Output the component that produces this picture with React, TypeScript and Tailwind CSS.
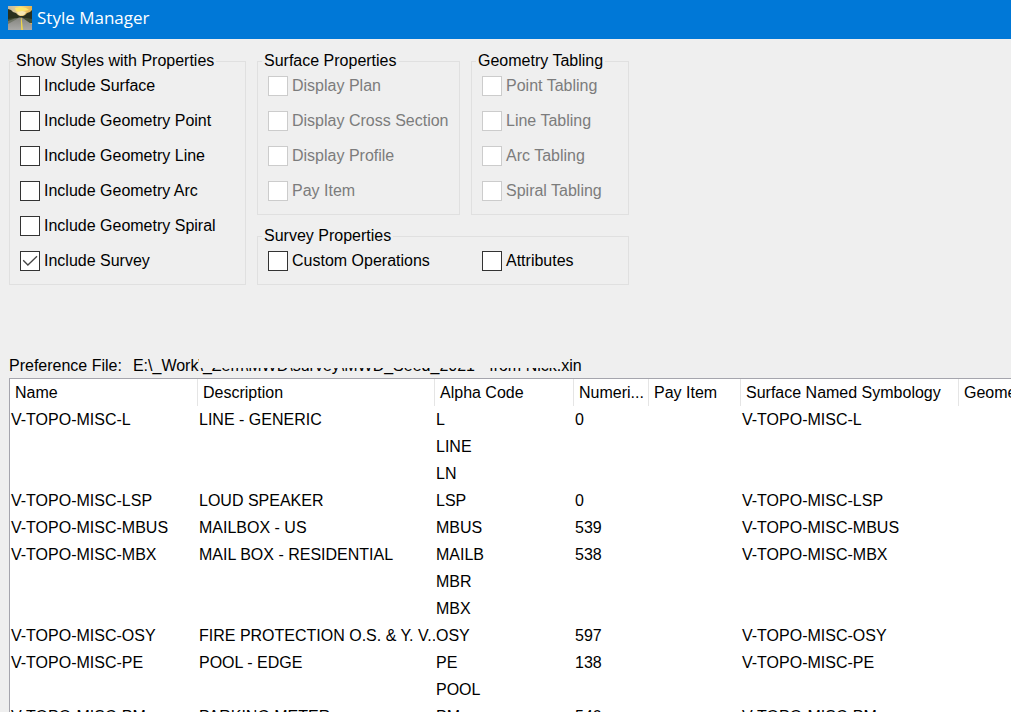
import { useState } from "react";

type Option = { label: string; checked?: boolean; disabled?: boolean };

const styleOptions: Option[] = [
  { label: "Include Surface" },
  { label: "Include Geometry Point" },
  { label: "Include Geometry Line" },
  { label: "Include Geometry Arc" },
  { label: "Include Geometry Spiral" },
  { label: "Include Survey", checked: true },
];

const surfaceOptions: Option[] = [
  { label: "Display Plan", disabled: true },
  { label: "Display Cross Section", disabled: true },
  { label: "Display Profile", disabled: true },
  { label: "Pay Item", disabled: true },
];

const tablingOptions: Option[] = [
  { label: "Point Tabling", disabled: true },
  { label: "Line Tabling", disabled: true },
  { label: "Arc Tabling", disabled: true },
  { label: "Spiral Tabling", disabled: true },
];

const headers = [
  "Name",
  "Description",
  "Alpha Code",
  "Numeri...",
  "Pay Item",
  "Surface Named Symbology",
  "Geometry Point Symbology",
];

// name, description, alpha code, numeric code, pay item, surface symbology, geometry symbology
const rows = [
  ["V-TOPO-MISC-L", "LINE - GENERIC", "L", "0", "", "V-TOPO-MISC-L", ""],
  ["", "", "LINE", "", "", "", ""],
  ["", "", "LN", "", "", "", ""],
  ["V-TOPO-MISC-LSP", "LOUD SPEAKER", "LSP", "0", "", "V-TOPO-MISC-LSP", ""],
  ["V-TOPO-MISC-MBUS", "MAILBOX - US", "MBUS", "539", "", "V-TOPO-MISC-MBUS", ""],
  ["V-TOPO-MISC-MBX", "MAIL BOX - RESIDENTIAL", "MAILB", "538", "", "V-TOPO-MISC-MBX", ""],
  ["", "", "MBR", "", "", "", ""],
  ["", "", "MBX", "", "", "", ""],
  ["V-TOPO-MISC-OSY", "FIRE PROTECTION O.S. & Y. V..", "OSY", "597", "", "V-TOPO-MISC-OSY", ""],
  ["V-TOPO-MISC-PE", "POOL - EDGE", "PE", "138", "", "V-TOPO-MISC-PE", ""],
  ["", "", "POOL", "", "", "", ""],
  ["V-TOPO-MISC-PM", "PARKING METER", "PM", "540", "", "V-TOPO-MISC-PM", ""],
];

function Check({ option }: { option: Option }) {
  const [checked, setChecked] = useState(!!option.checked);

  return (
    <label
      className={
        option.disabled
          ? "flex h-5 items-center gap-1 whitespace-nowrap text-[#7c7c7c]"
          : "flex h-5 items-center gap-1 whitespace-nowrap text-black"
      }
    >
      <span className="relative h-5 w-5 shrink-0">
        <input
          type="checkbox"
          checked={checked}
          disabled={option.disabled}
          onChange={(e) => setChecked(e.target.checked)}
          className="block h-5 w-5 appearance-none border border-[#333] bg-white disabled:border-[#cccccc]"
        />
        {checked && (
          <svg className="pointer-events-none absolute inset-0 h-5 w-5" viewBox="0 0 20 20" fill="none">
            <path d="M3.2 9.2l4.7 4.8L17 5.2" stroke="#444" strokeWidth="1.3" />
          </svg>
        )}
      </span>
      {option.label}
    </label>
  );
}

function Group({
  title,
  className = "",
  children,
}: {
  title: string;
  className?: string;
  children: React.ReactNode;
}) {
  return (
    <fieldset className={`min-w-0 border border-[#e0e0e0] px-1 pb-[13px] ${className}`}>
      <legend className="h-5 whitespace-nowrap px-0.5 leading-5">{title}</legend>
      <div className="px-1.5 pt-[5px]">{children}</div>
    </fieldset>
  );
}

function CheckList({ options }: { options: Option[] }) {
  return (
    <div className="flex flex-col gap-[15px]">
      {options.map((o) => (
        <Check key={o.label} option={o} />
      ))}
    </div>
  );
}

function RoadIcon() {
  return (
    <svg className="h-6 w-6 shrink-0" viewBox="0 0 24 24">
      <defs>
        <linearGradient id="sky" x1="0" y1="0" x2="1" y2="0">
          <stop offset="0" stopColor="#b9b5a6" />
          <stop offset="0.5" stopColor="#f0d58a" />
          <stop offset="1" stopColor="#e3b04a" />
        </linearGradient>
        <linearGradient id="road" x1="0" y1="0" x2="0" y2="1">
          <stop offset="0" stopColor="#85857f" />
          <stop offset="1" stopColor="#a9a9a7" />
        </linearGradient>
      </defs>
      <rect width="24" height="24" fill="url(#sky)" />
      <path d="M7 2l6-1 5 1 3 2-5 1-4 2-4-2z" fill="#fbe56b" />
      <path d="M9 6l5-1 4 1-2 3h-5z" fill="#f6e7b4" />
      <path d="M0 3l3 1 2 2 3 1 2 2 2 1h3l2-1 2-2 3-1 2-2v11H0z" fill="#28301d" />
      <path d="M0 13l6-1 4 0h5l4 0 5 1v4H0z" fill="#424c33" />
      <path d="M11 11.500h3l10 7v5.500H0v-7z" fill="url(#road)" />
      <path d="M0 15l7-2.500h3L0 18z" fill="#6f7466" />
      <path d="M12.800 12h.8l1.400 12h-1.800z" fill="#eed64a" />
    </svg>
  );
}

export default function App() {
  return (
    <div className="flex h-screen flex-col overflow-hidden bg-[#efefef] font-['Liberation_Sans',Arial,sans-serif] text-base text-black">
      {/* Title bar */}
      <header className="flex h-[39px] shrink-0 items-center gap-[5px] bg-[#0078d7] px-2 pb-1">
        <RoadIcon />
        <h1 className="font-['Open_Sans','Noto_Sans',sans-serif] text-[17px] leading-6 text-white">
          Style Manager
        </h1>
      </header>

      <main className="flex min-h-0 flex-1 flex-col pl-[9px] pt-3">
        {/* Filters */}
        <form className="grid shrink-0 grid-cols-[237px_203px_158px] gap-[11px]">
          <Group title="Show Styles with Properties" className="row-span-2">
            <CheckList options={styleOptions} />
          </Group>
          <Group title="Surface Properties">
            <CheckList options={surfaceOptions} />
          </Group>
          <Group title="Geometry Tabling">
            <CheckList options={tablingOptions} />
          </Group>
          <Group title="Survey Properties" className="col-span-2">
            <div className="grid grid-cols-[203px_auto] gap-[11px]">
              <Check option={{ label: "Custom Operations" }} />
              <Check option={{ label: "Attributes" }} />
            </div>
          </Group>
        </form>

        {/* Preference file, the folder part is masked */}
        <div className="mt-[68px] flex h-[25px] shrink-0 gap-[11px] whitespace-nowrap leading-[25px]">
          <span>Preference File:</span>
          <span className="relative">
            E:\_Work\_Zem\MWD\survey\MWD_Seed_2021 - from Nick.xin
            <span className="absolute left-[66px] right-[24px] top-0 h-[15px] bg-[#efefef]" />
          </span>
        </div>

        {/* Styles list */}
        <div className="min-h-0 flex-1 overflow-hidden border-l border-t border-[#a5a5ad] bg-white">
          <table className="w-[1149px] table-fixed border-collapse text-left">
            <colgroup>
              <col className="w-[188px]" />
              <col className="w-[237px]" />
              <col className="w-[139px]" />
              <col className="w-[75px]" />
              <col className="w-[92px]" />
              <col className="w-[218px]" />
              <col className="w-[200px]" />
            </colgroup>
            <thead>
              <tr className="h-[27px]">
                {headers.map((h) => (
                  <th key={h} scope="col" className="whitespace-nowrap p-0 font-normal leading-[27px]">
                    <div className="border-r border-[#e5e5e5] pl-[5px]">{h}</div>
                  </th>
                ))}
              </tr>
            </thead>
            <tbody>
              {rows.map((row, i) => (
                <tr key={i} className="h-[27px]">
                  {row.map((cell, j) => (
                    <td key={j} className="overflow-hidden whitespace-nowrap p-0 pl-px leading-[27px]">
                      {cell}
                    </td>
                  ))}
                </tr>
              ))}
            </tbody>
          </table>
        </div>
      </main>
    </div>
  );
}
